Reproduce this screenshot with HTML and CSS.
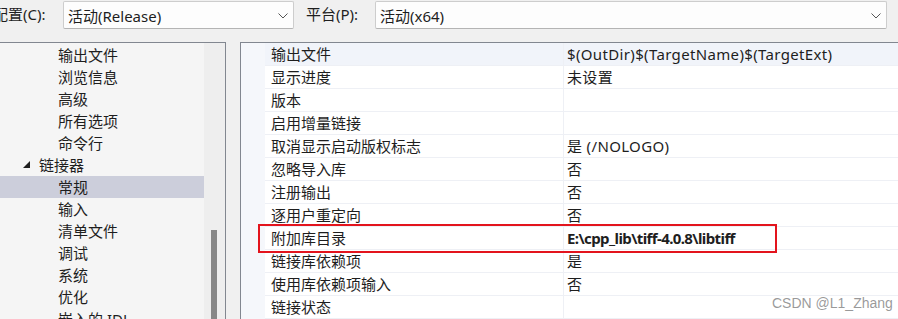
FILE: index.html
```html
<!DOCTYPE html>
<html>

<head>
    <title>属性页 - 链接器 - 常规</title>
    <link rel="stylesheet" href="styles.css">
</head>

<body>
    <div class="topbar">
        <span class="label config-label">配置(C):</span>
        <div class="combo config-combo">
            <span>活动(Release)</span>
            <svg class="chevron" width="10" height="6" viewBox="0 0 10 6"><path d="M0.5 0.5 L5 5 L9.5 0.5" fill="none" stroke="#555" stroke-width="1"/></svg>
        </div>
        <span class="label platform-label">平台(P):</span>
        <div class="combo platform-combo">
            <span>活动(x64)</span>
            <svg class="chevron" width="10" height="6" viewBox="0 0 10 6"><path d="M0.5 0.5 L5 5 L9.5 0.5" fill="none" stroke="#555" stroke-width="1"/></svg>
        </div>
    </div>

    <div class="main">
        <div class="tree-panel">
            <ul class="tree">
                <li class="child">输出文件</li>
                <li class="child">浏览信息</li>
                <li class="child">高级</li>
                <li class="child">所有选项</li>
                <li class="child">命令行</li>
                <li class="parent">
                    <svg class="expander" width="8" height="8" viewBox="0 0 8 8"><path d="M7 0 L7 7 L0 7 Z" fill="#1e1e1e"/></svg>
                    链接器
                </li>
                <li class="child selected">常规</li>
                <li class="child">输入</li>
                <li class="child">清单文件</li>
                <li class="child">调试</li>
                <li class="child">系统</li>
                <li class="child">优化</li>
                <li class="child">嵌入的 IDL</li>
            </ul>
            <div class="scrollbar">
                <div class="thumb"></div>
            </div>
        </div>

        <div class="grid-panel">
            <div class="grid">
                <div class="row first"><span class="name">输出文件</span><span class="value">$(OutDir)$(TargetName)$(TargetExt)</span></div>
                <div class="row"><span class="name">显示进度</span><span class="value">未设置</span></div>
                <div class="row"><span class="name">版本</span><span class="value"></span></div>
                <div class="row"><span class="name">启用增量链接</span><span class="value"></span></div>
                <div class="row"><span class="name">取消显示启动版权标志</span><span class="value">是 (/NOLOGO)</span></div>
                <div class="row"><span class="name">忽略导入库</span><span class="value">否</span></div>
                <div class="row"><span class="name">注册输出</span><span class="value">否</span></div>
                <div class="row"><span class="name">逐用户重定向</span><span class="value">否</span></div>
                <div class="row"><span class="name">附加库目录</span><span class="value bold">E:\cpp_lib\tiff-4.0.8\libtiff</span></div>
                <div class="row"><span class="name">链接库依赖项</span><span class="value">是</span></div>
                <div class="row"><span class="name">使用库依赖项输入</span><span class="value">否</span></div>
                <div class="row"><span class="name">链接状态</span><span class="value"></span></div>
            </div>
            <div class="highlight-box"></div>
        </div>
    </div>

    <div class="watermark">CSDN @L1_Zhang</div>
</body>

</html>
```

FILE: styles.css
```css
body {
    margin: 0;
    padding: 0;
    width: 898px;
    height: 319px;
    overflow: hidden;
    background-color: #f0f0f0;
    font-family: "Noto Sans", "Noto Sans CJK SC", sans-serif;
    font-size: 15px;
    color: #1e1e1e;
    position: relative;
}

.topbar {
    display: flex;
    align-items: flex-start;
    height: 42px;
    margin-left: -7px;
}

.label {
    line-height: 29px;
    white-space: nowrap;
}

.config-label {
    width: 70px;
}

.platform-label {
    margin-left: 12px;
    width: 69px;
}

.combo {
    display: flex;
    align-items: center;
    justify-content: space-between;
    box-sizing: border-box;
    height: 28px;
    margin-top: 1px;
    padding: 0 5px 0 4px;
    background-color: #fdfdfd;
    border: 1px solid #cdcdcd;
    border-bottom-color: #b4b4b4;
    border-radius: 2px;
}

.config-combo {
    width: 231px;
}

.platform-combo {
    width: 512px;
}

.chevron {
    margin-top: 2px;
}

.main {
    display: flex;
    height: 277px;
}

.tree-panel {
    display: flex;
    width: 227px;
    margin-left: -1px;
    box-sizing: border-box;
    border-top: 1px solid #828790;
    border-right: 1px solid #828790;
}

.tree {
    list-style: none;
    margin: 0;
    padding: 1px 0 0;
    width: 205px;
    background-color: #f5f5f5;
}

.tree li {
    height: 22px;
    line-height: 22px;
    white-space: nowrap;
    display: flex;
    align-items: center;
}

.tree .child {
    padding-left: 59px;
}

.tree .parent {
    padding-left: 24px;
}

.tree .expander {
    margin-right: 8px;
}

.tree .selected {
    background-color: #cccedb;
}

.scrollbar {
    flex: 1;
    background-color: #eeeeee;
    position: relative;
}

.thumb {
    position: absolute;
    left: 7px;
    top: 187px;
    width: 6px;
    height: 100px;
    background-color: #878787;
}

.grid-panel {
    flex: 1;
    margin-left: 14px;
    border-top: 1px solid #828790;
    border-left: 1px solid #828790;
    background-color: #f5f7fb;
    position: relative;
}

.grid {
    padding-left: 24px;
}

.row {
    display: flex;
    height: 22px;
    line-height: 22px;
    border-bottom: 1px solid #eef0f5;
    background-color: #ffffff;
    white-space: nowrap;
}

.row.first {
    background-color: #f1f4fa;
}

.name {
    width: 292px;
    padding-left: 6px;
    border-right: 1px solid #eef0f5;
}

.value {
    flex: 1;
    padding-left: 3px;
    letter-spacing: 0.35px;
}

.bold {
    font-weight: bold;
    letter-spacing: -0.6px;
}

.highlight-box {
    position: absolute;
    left: 17px;
    top: 181px;
    width: 519px;
    height: 29px;
    box-sizing: border-box;
    border: 2px solid #e3141d;
}

.watermark {
    position: absolute;
    left: 772px;
    top: 295px;
    font-family: "Liberation Sans", sans-serif;
    font-size: 14px;
    color: rgba(120, 120, 120, 0.75);
}
```
